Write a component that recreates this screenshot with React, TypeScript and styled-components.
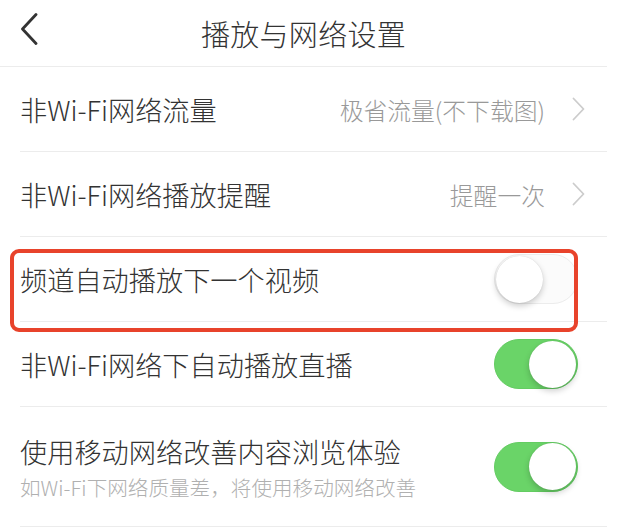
import styled, { createGlobalStyle } from "styled-components";

const GlobalStyle = createGlobalStyle`
    html, body {
        margin: 0;
        padding: 0;
        background: #ffffff;
    }
    body {
        font-family: "Noto Sans CJK SC", "Noto Sans", "Liberation Sans", sans-serif;
        color: #333333;
    }
`;

const Screen = styled.div`
    width: 607px;
    background: #ffffff;
`;

const Header = styled.div`
    height: 66px;
    display: flex;
    align-items: center;
    justify-content: center;
    position: relative;
    border-bottom: 1px solid #ececec;
`;

const BackButton = styled.div`
    position: absolute;
    left: 20px;
    top: 12px;
    width: 22px;
    height: 34px;
    display: flex;
    align-items: center;
`;

const Title = styled.h1`
    margin: 0;
    font-size: 29px;
    font-weight: 300;
    color: #333333;
    letter-spacing: 0.3px;
`;

const Row = styled.div<{ tall?: boolean }>`
    position: relative;
    margin-left: 20px;
    height: ${(props) => (props.tall ? "119px" : "84px")};
    border-bottom: 1px solid #ececec;
    display: flex;
    align-items: center;
    justify-content: space-between;
    padding-right: 22px;
`;

const Texts = styled.div`
    display: flex;
    flex-direction: column;
    gap: 6px;
`;

const Label = styled.div`
    font-size: 27.2px;
    font-weight: 300;
    line-height: 34px;
    color: #333333;
`;

const SubLabel = styled.div`
    font-size: 20.6px;
    font-weight: 300;
    line-height: 26px;
    color: #b0b0b0;
`;

const Right = styled.div`
    display: flex;
    align-items: center;
    gap: 27px;
`;

const Value = styled.span`
    font-size: 23.8px;
    font-weight: 300;
    color: #999999;
`;

const Track = styled.div<{ on: boolean }>`
    width: 84px;
    height: 50px;
    border-radius: 25px;
    margin-right: 7px;
    box-sizing: border-box;
    background: ${(props) => (props.on ? "#6ad468" : "#fbfbfb")};
    border: 1px solid ${(props) => (props.on ? "#64cc62" : "#ececec")};
    display: flex;
    align-items: center;
    justify-content: ${(props) => (props.on ? "flex-end" : "flex-start")};
    padding: 0 1px;
`;

const Knob = styled.div`
    width: 47px;
    height: 47px;
    border-radius: 50%;
    background: #ffffff;
    box-shadow: 0 3px 6px rgba(0, 0, 0, 0.2), 0 0 1px rgba(0, 0, 0, 0.15);
`;

const Highlight = styled.div`
    position: absolute;
    left: -10px;
    top: 12px;
    width: 568px;
    height: 83px;
    box-sizing: border-box;
    border: 4px solid #e8432b;
    border-radius: 9px;
    pointer-events: none;
`;

function Chevron() {
    return (
        <svg width="13" height="24" viewBox="0 0 13 24">
            <path d="M1.5 1.5 L11.5 12 L1.5 22.5" fill="none" stroke="#cccccc" strokeWidth="1.8" strokeLinecap="round" strokeLinejoin="round" />
        </svg>
    );
}

function Switch({ on }: { on: boolean }) {
    return (
        <Track on={on}>
            <Knob />
        </Track>
    );
}

export default function App() {
    return (
        <Screen>
            <GlobalStyle />
            <Header>
                <BackButton>
                    <svg width="18" height="32" viewBox="0 0 18 32">
                        <path d="M16 1.5 L2.5 16 L16 30.5" fill="none" stroke="#333333" strokeWidth="2.8" strokeLinecap="round" strokeLinejoin="round" />
                    </svg>
                </BackButton>
                <Title>播放与网络设置</Title>
            </Header>
            <Row>
                <Label>非Wi-Fi网络流量</Label>
                <Right>
                    <Value>极省流量(不下载图)</Value>
                    <Chevron />
                </Right>
            </Row>
            <Row>
                <Label>非Wi-Fi网络播放提醒</Label>
                <Right>
                    <Value>提醒一次</Value>
                    <Chevron />
                </Right>
            </Row>
            <Row>
                <Label>频道自动播放下一个视频</Label>
                <Switch on={false} />
                <Highlight />
            </Row>
            <Row>
                <Label>非Wi-Fi网络下自动播放直播</Label>
                <Switch on={true} />
            </Row>
            <Row tall>
                <Texts>
                    <Label>使用移动网络改善内容浏览体验</Label>
                    <SubLabel>如Wi-Fi下网络质量差，将使用移动网络改善</SubLabel>
                </Texts>
                <Switch on={true} />
            </Row>
        </Screen>
    );
}
